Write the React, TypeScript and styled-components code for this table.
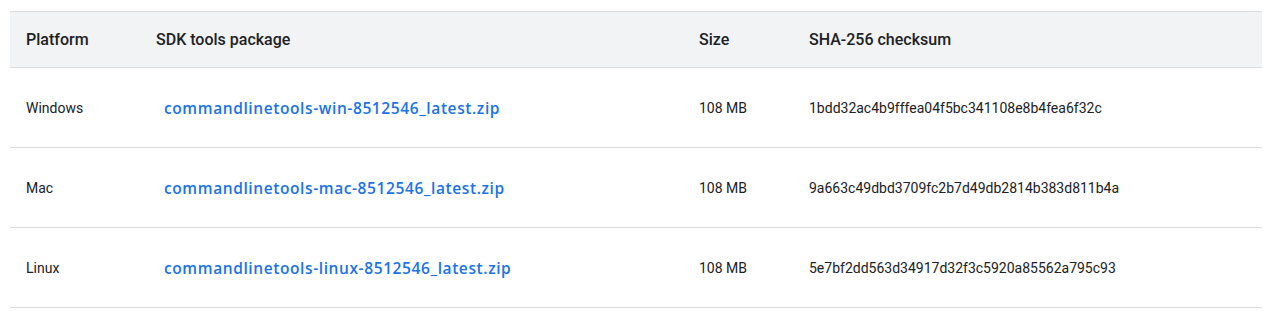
import React from "react";
import styled, { createGlobalStyle } from "styled-components";

const Global = createGlobalStyle`
  html, body { margin: 0; padding: 0; background: #fff; }
  body { font-family: Roboto, "Liberation Sans", sans-serif; color: #202124; }
`;

const Wrap = styled.div`
  padding: 11px 1px 0 10px;
`;

const Table = styled.table`
  width: 100%;
  border-collapse: collapse;
  border-spacing: 0;
`;

const HeadRow = styled.tr`
  background: #f1f3f4;
  border-top: 1px solid #dadce0;
  border-bottom: 1px solid #dadce0;
`;

const Th = styled.th<{ $w?: number }>`
  text-align: left;
  font-family: Roboto, "Liberation Sans", sans-serif;
  font-weight: 500;
  font-size: 16px;
  color: #202124;
  height: 56px;
  padding: 0 16px;
  box-sizing: border-box;
  width: ${(p) => (p.$w ? `${p.$w}px` : "auto")};
`;

const Row = styled.tr`
  border-bottom: 1px solid #dadce0;
`;

const Td = styled.td`
  font-size: 14px;
  color: #202124;
  height: 79px;
  padding: 0 16px;
  vertical-align: middle;
`;

const Link = styled.a`
  display: inline-block;
  padding-left: 8px;
  font-family: "Open Sans", sans-serif;
  font-weight: 600;
  font-size: 15.5px;
  letter-spacing: 0.6px;
  color: #1a73e8;
  text-decoration: none;
`;

const rows = [
  { p: "Windows", f: "commandlinetools-win-8512546_latest.zip", s: "108 MB", c: "1bdd32ac4b9fffea04f5bc341108e8b4fea6f32c" },
  { p: "Mac", f: "commandlinetools-mac-8512546_latest.zip", s: "108 MB", c: "9a663c49dbd3709fc2b7d49db2814b383d811b4a" },
  { p: "Linux", f: "commandlinetools-linux-8512546_latest.zip", s: "108 MB", c: "5e7bf2dd563d34917d32f3c5920a85562a795c93" },
];

export default function App() {
  return (
    <Wrap>
      <Global />
      <Table>
        <thead>
          <HeadRow>
            <Th $w={130}>Platform</Th>
            <Th $w={543}>SDK tools package</Th>
            <Th $w={110}>Size</Th>
            <Th>SHA-256 checksum</Th>
          </HeadRow>
        </thead>
        <tbody>
          {rows.map((r) => (
            <Row key={r.p}>
              <Td>{r.p}</Td>
              <Td>
                <Link href="#">{r.f}</Link>
              </Td>
              <Td>{r.s}</Td>
              <Td>{r.c}</Td>
            </Row>
          ))}
        </tbody>
      </Table>
    </Wrap>
  );
}
